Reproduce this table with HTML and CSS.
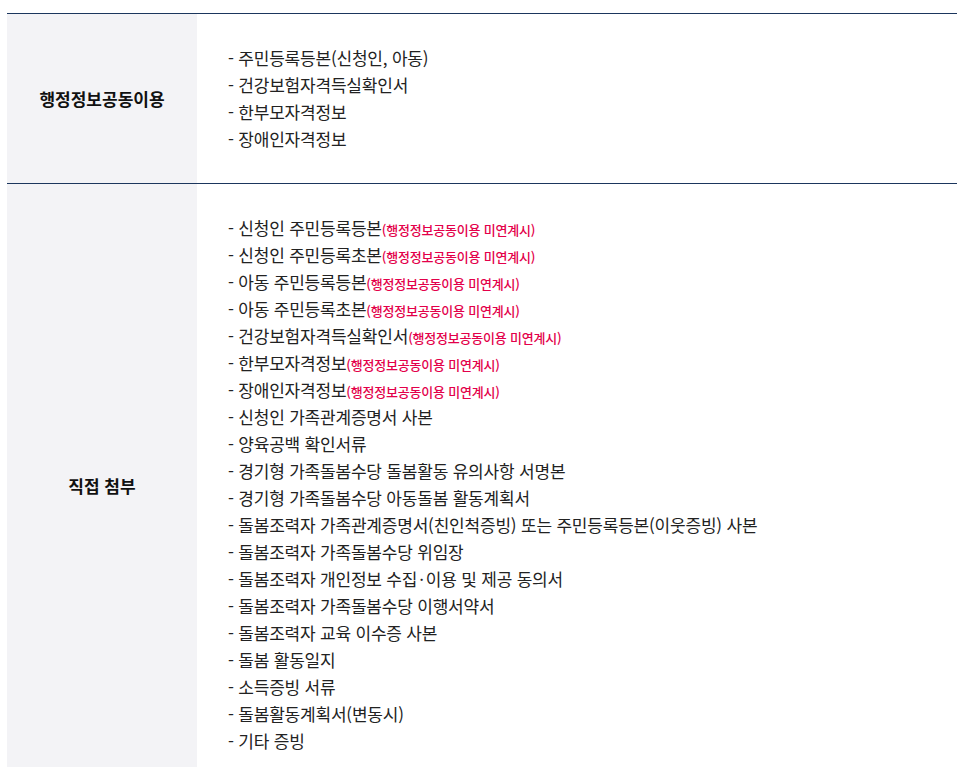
FILE: index.html
```html
<!DOCTYPE html>
<html lang="ko">
<head>
<meta charset="utf-8">
<link rel="stylesheet" href="styles.css">
</head>
<body>
<div class="table">
  <div class="row first">
    <div class="head">행정정보공동이용</div>
    <div class="cell">
      <ul class="list">
        <li>- 주민등록등본(신청인, 아동)</li>
        <li>- 건강보험자격득실확인서</li>
        <li>- 한부모자격정보</li>
        <li>- 장애인자격정보</li>
      </ul>
    </div>
  </div>
  <div class="row second">
    <div class="head">직접 첨부</div>
    <div class="cell">
      <ul class="list">
        <li>- 신청인 주민등록등본<span class="note">(행정정보공동이용 미연계시)</span></li>
        <li>- 신청인 주민등록초본<span class="note">(행정정보공동이용 미연계시)</span></li>
        <li>- 아동 주민등록등본<span class="note">(행정정보공동이용 미연계시)</span></li>
        <li>- 아동 주민등록초본<span class="note">(행정정보공동이용 미연계시)</span></li>
        <li>- 건강보험자격득실확인서<span class="note">(행정정보공동이용 미연계시)</span></li>
        <li>- 한부모자격정보<span class="note">(행정정보공동이용 미연계시)</span></li>
        <li>- 장애인자격정보<span class="note">(행정정보공동이용 미연계시)</span></li>
        <li>- 신청인 가족관계증명서 사본</li>
        <li>- 양육공백 확인서류</li>
        <li>- 경기형 가족돌봄수당 돌봄활동 유의사항 서명본</li>
        <li>- 경기형 가족돌봄수당 아동돌봄 활동계획서</li>
        <li>- 돌봄조력자 가족관계증명서(친인척증빙) 또는 주민등록등본(이웃증빙) 사본</li>
        <li>- 돌봄조력자 가족돌봄수당 위임장</li>
        <li>- 돌봄조력자 개인정보 수집<span class="dot">·</span>이용 및 제공 동의서</li>
        <li>- 돌봄조력자 가족돌봄수당 이행서약서</li>
        <li>- 돌봄조력자 교육 이수증 사본</li>
        <li>- 돌봄 활동일지</li>
        <li>- 소득증빙 서류</li>
        <li>- 돌봄활동계획서(변동시)</li>
        <li>- 기타 증빙</li>
      </ul>
    </div>
  </div>
</div>
</body>
</html>
```

FILE: styles.css
```css
html, body {
  margin: 0;
  padding: 0;
  background: #fff;
}
body {
  font-family: "Noto Sans CJK KR", "Noto Sans", sans-serif;
  color: #222;
}
.table {
  margin: 13px 7px 0 7px;
  border-top: 1px solid #1b365d;
}
.row {
  display: flex;
}
.row.first {
  border-bottom: 1px solid #1b365d;
}
.head {
  width: 190px;
  flex: none;
  background: #f3f3f6;
  display: flex;
  align-items: center;
  justify-content: center;
  font-size: 17px;
  font-weight: 700;
  color: #111;
}
.cell {
  flex: 1;
  padding: 30px 0 32px 31px;
}
.row.first .cell {
  padding: 30px 0 31px 31px;
}
.list {
  list-style: none;
  margin: 0;
  padding: 0;
}
.list li {
  font-size: 17px;
  line-height: 27px;
  letter-spacing: -0.2px;
  color: #222;
}
.dot {
  margin: 0 2px;
}
.note {
  font-size: 13px;
  line-height: 1;
  font-weight: 500;
  color: #e3004a;
  letter-spacing: -0.2px;
}
```
